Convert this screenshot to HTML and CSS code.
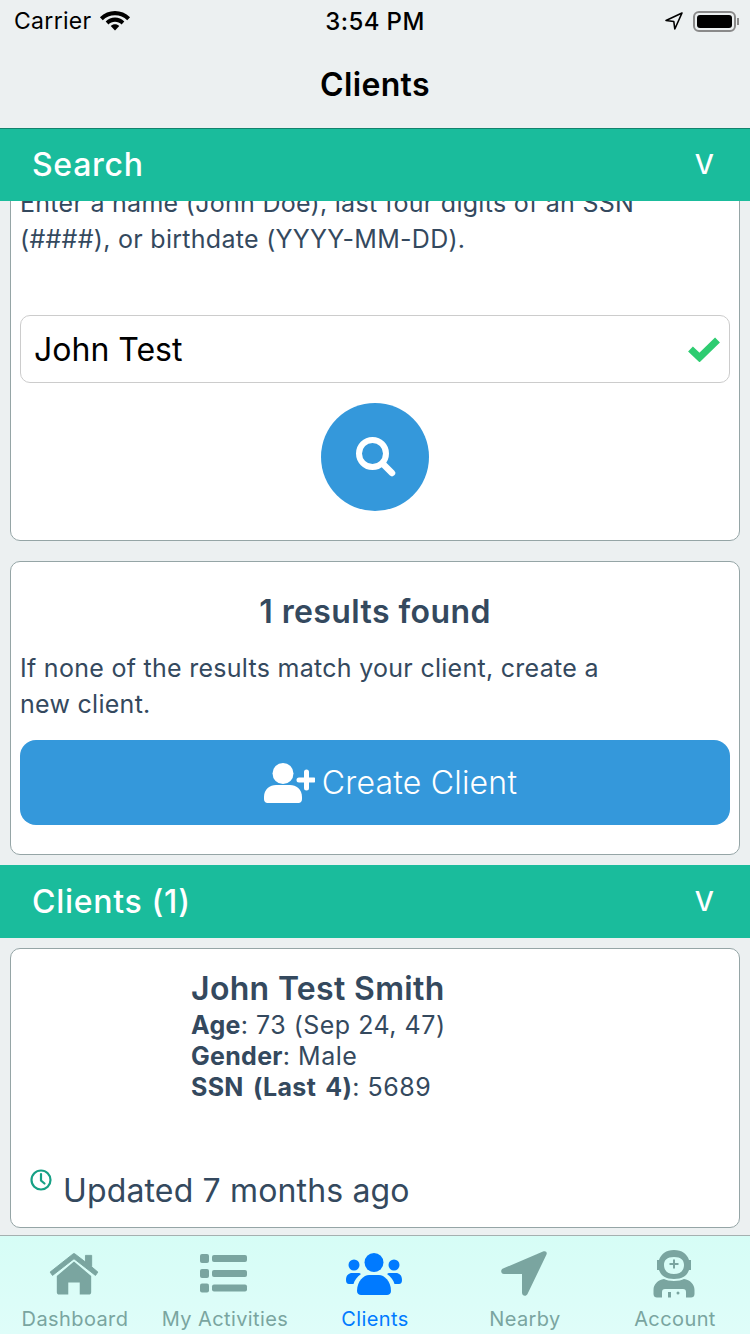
FILE: index.html
```html
<!DOCTYPE html>
<html lang="en">
<head>
<meta charset="utf-8">
<title>Clients</title>
<link rel="stylesheet" href="styles.css">
</head>
<body>
<div class="app">
  <header class="top">
    <div class="status">
      <div class="status-left">
        <span>Carrier</span>
        <svg class="wifi" viewBox="0 0 34 24" width="32" height="23"><path d="M17 3C11 3 5.500 5.300 1 9.600L4 12.800C7.500 9.400 12 7.500 17 7.500S26.500 9.400 30 12.800L33 9.600C28.500 5.300 23 3 17 3Z"/><path d="M17 10C13.300 10 9.800 11.500 7.100 14.200L10 17.300C11.900 15.400 14.300 14.400 17 14.400S22.100 15.400 24 17.300L26.900 14.200C24.200 11.500 20.700 10 17 10Z"/><path d="M17 17C15.300 17 13.700 17.700 12.500 18.900L17 23.800L21.500 18.900C20.300 17.700 18.700 17 17 17Z"/></svg>
      </div>
      <span class="status-time">3:54 PM</span>
      <div class="status-right">
        <svg class="loc" viewBox="0 0 20 20" width="20" height="20"><path d="M18 2 2 9.500 9.800 10.500 10.800 18Z" fill="none" stroke="#000" stroke-width="1.600" stroke-linejoin="round"/></svg>
        <div class="battery"><div class="battery-fill"></div></div>
        <div class="battery-cap"></div>
      </div>
    </div>
    <div class="nav-title">Clients</div>
  </header>

  <main class="content">
    <div class="section-bar section-bar-first">
      <span>Search</span><span class="chev">V</span>
    </div>
    <section class="card card-search">
      <p class="body-text">Enter a name (John Doe), last four digits of an SSN (####), or birthdate (YYYY-MM-DD).</p>
      <div class="field">
        <span class="field-value">John Test</span>
        <svg class="field-check" viewBox="0 0 34 26" width="34" height="26"><path d="M3.500 13 12.500 21.500 30.500 4" fill="none" stroke="#2ecc71" stroke-width="7"/></svg>
      </div>
      <div class="search-row">
        <div class="search-btn">
          <svg viewBox="0 0 42 42" width="42" height="42"><circle cx="17.500" cy="17.500" r="13.500" fill="none" stroke="#fff" stroke-width="6"/><path d="M28 28 37 37" stroke="#fff" stroke-width="6.500" stroke-linecap="round"/></svg>
        </div>
      </div>
    </section>

    <section class="card card-results">
      <h2 class="results-title">1 results found</h2>
      <p class="body-text results-text">If none of the results match your client, create a new client.</p>
      <div class="create-btn">
        <svg viewBox="0 0 52 42" width="52" height="42"><circle cx="20" cy="11.500" r="10.500" fill="#fff"/><path d="M1 35C1 27 7 23 13 23H27C33 23 39 27 39 35V37C39 39.500 37.500 41 35.500 41H4.500C2.500 41 1 39.500 1 37Z" fill="#fff"/><path d="M43.500 10V26M36 18H51" stroke="#fff" stroke-width="5" stroke-linecap="round"/></svg>
        <span>Create Client</span>
      </div>
    </section>

    <div class="section-bar section-bar-clients">
      <span>Clients (1)</span><span class="chev">V</span>
    </div>

    <section class="card card-client">
      <div class="client-info">
        <h3 class="client-name">John Test Smith</h3>
        <div class="client-line"><b>Age</b>: 73 (Sep 24, 47)</div>
        <div class="client-line"><b>Gender</b>: Male</div>
        <div class="client-line"><b>SSN (Last 4)</b>: 5689</div>
      </div>
      <div class="updated">
        <svg viewBox="0 0 22 22" width="22" height="22"><circle cx="11" cy="11" r="9.500" fill="none" stroke="#16a085" stroke-width="2.200"/><path d="M11 5V11.500L14.500 14.500" fill="none" stroke="#16a085" stroke-width="2.200" stroke-linecap="round"/></svg>
        <span>Updated 7 months ago</span>
      </div>
    </section>
  </main>

  <nav class="tabs">
    <div class="tab">
      <div class="tab-icon"><svg viewBox="0 0 54 44" width="52" height="42"><path d="M27 9 9 24V41C9 42.500 10 43.500 11.500 43.500H21V31H33V43.500H42.500C44 43.500 45 42.500 45 41V24Z"/><path d="M2 20 26 1Q27 .3 28 1L39 9.500V2.500H45.500V14.500L52 20 49.500 23.500 27 6 4.500 23.500Z" stroke="#7aa5a0" stroke-width="1" stroke-linejoin="round"/></svg></div>
      <span>Dashboard</span>
    </div>
    <div class="tab">
      <div class="tab-icon"><svg viewBox="0 0 48 40" width="48" height="40"><rect x="0" y="0" width="9" height="9" rx="2"/><rect x="12" y="1" width="35" height="7" rx="2"/><rect x="0" y="15" width="9" height="9" rx="2"/><rect x="12" y="16" width="35" height="7" rx="2"/><rect x="0" y="29.500" width="9" height="9" rx="2"/><rect x="12" y="30.500" width="35" height="7" rx="2"/></svg></div>
      <span>My Activities</span>
    </div>
    <div class="tab tab-active">
      <div class="tab-icon"><svg viewBox="0 0 58 42" width="58" height="42"><circle cx="29" cy="9.500" r="9.500"/><circle cx="9" cy="12" r="5.500"/><circle cx="49" cy="12" r="5.500"/><path d="M12 38C12 28 19 22 24 22H34C39 22 46 28 46 38C46 40.500 44 42 42 42H16C14 42 12 40.500 12 38Z"/><path d="M1 27C1 22 4 20 7 20H13C14.500 20 15.500 20.500 16 21C12 24 9.500 27 8.500 31H4C2 31 1 29.500 1 27Z"/><path d="M57 27C57 22 54 20 51 20H45C43.500 20 42.500 20.500 42 21C46 24 48.500 27 49.500 31H54C56 31 57 29.500 57 27Z"/></svg></div>
      <span>Clients</span>
    </div>
    <div class="tab">
      <div class="tab-icon"><svg viewBox="0 0 48 48" width="48" height="48"><path d="M43 1.500 3 18.500C0 20 1 24 4 24H22V42.500C22 46 26 47 27.500 44L46.500 4.500C47.500 2 45.500 .5 43 1.500Z"/></svg></div>
      <span>Nearby</span>
    </div>
    <div class="tab">
      <div class="tab-icon"><svg viewBox="0 0 42 48" width="42" height="48"><path fill-rule="evenodd" d="M21 0C29 0 34 4 36 10H38V20H36C34 26 29 29 21 29S8 26 6 20H4V10H6C8 4 13 0 21 0ZM21 7C14 7 11 10 11 15S14 24 21 24 31 20 31 15 28 7 21 7Z"/><path d="M20 9.500H22V13H25.500V15H22V18.500H20V15H16.500V13H20Z"/><path fill-rule="evenodd" d="M11 29C15 31.500 27 31.500 31 29C37 30 41.500 34 41.500 40V44C41.500 46.500 40 47.500 38 47.500H33V42C33 40 32 39 30 39H12C10 39 9 40 9 42V47.500H4C2 47.500 .5 46.500 .5 44V40C.5 34 5 30 11 29Z"/><rect x="15" y="42" width="3" height="5.500"/><circle cx="25" cy="43" r="1.500"/></svg></div>
      <span>Account</span>
    </div>
  </nav>
</div>
</body>
</html>
```
FILE: styles.css
```css
* { box-sizing: border-box; }
html, body { margin: 0; padding: 0; }
body { font-family: Inter, "Liberation Sans", sans-serif; }
.app { width: 750px; height: 1334px; display: flex; flex-direction: column; background: #ecf0f1; overflow: hidden; }
.top { height: 128px; flex: none; background: #ecf0f1; }
.status { height: 40px; display: flex; align-items: center; justify-content: space-between; padding: 2px 11px 0 14px; position: relative; color: #000; font-size: 23px; letter-spacing: .3px; }
.status-left { display: flex; align-items: center; gap: 7px; }
.wifi { fill: #000; margin-top: -3px; }
.status-time { position: absolute; left: 0; right: 0; text-align: center; font-weight: 500; font-size: 24px; letter-spacing: .4px; }
.status-right { display: flex; align-items: center; }
.loc { margin-right: 9px; }
.battery { width: 43px; height: 21px; border: 2px solid #8a8a8a; border-radius: 6px; padding: 2px; }
.battery-fill { height: 100%; width: 100%; background: #000; border-radius: 3px; }
.battery-cap { width: 2px; height: 7px; background: #8a8a8a; margin-left: 1px; }
.nav-title { height: 88px; display: flex; align-items: center; justify-content: center; font-size: 32px; font-weight: 600; color: #000; letter-spacing: .35px; }
.content { flex: none; height: 1107px; overflow: hidden; display: flex; flex-direction: column; }
.section-bar { height: 73px; flex: none; background: #1abc9c; color: #fff; display: flex; align-items: center; justify-content: space-between; padding: 0 36px 2px 32px; font-size: 32px; font-weight: 500; letter-spacing: .7px; position: relative; z-index: 1; }
.section-bar-first { border-top: 1px solid #12836d; }
.section-bar-clients { margin-top: 10px; padding-bottom: 0; }
.chev { font-size: 27px; font-weight: 500; letter-spacing: 0; }
.card { background: #fff; border: 1px solid #95a5a6; border-radius: 10px; margin: 0 10px; flex: none; padding: 0 9px; color: #34495e; }
.card-search { margin-top: -32px; height: 372px; padding-top: 15px; }
.body-text { margin: 0; font-size: 25px; line-height: 36px; letter-spacing: .28px; }
.field { height: 68px; margin-top: 58px; border: 1px solid #ccc; border-radius: 10px; display: flex; align-items: center; justify-content: space-between; padding: 0 8px 0 13px; }
.field-value { font-size: 32px; color: #000; }
.search-row { display: flex; justify-content: center; margin-top: 20px; }
.search-btn { width: 108px; height: 108px; border-radius: 50%; background: #3498db; display: flex; align-items: center; justify-content: center; padding-left: 2px; }
.card-results { margin-top: 20px; height: 294px; padding-top: 30px; }
.results-title { margin: 0; text-align: center; font-size: 32px; line-height: 40px; font-weight: 600; letter-spacing: .4px; }
.results-text { margin-top: 18px; width: 600px; }
.create-btn { height: 85px; margin-top: 18px; background: #3498db; border-radius: 16px; color: #fff; display: flex; align-items: center; justify-content: center; gap: 7px; padding-left: 30px; font-size: 32px; font-weight: 300; letter-spacing: .2px; }
.card-client { margin-top: 10px; height: 280px; position: relative; padding: 19px 20px 0 180px; }
.client-name { margin: 0; font-size: 32px; line-height: 42px; font-weight: 600; letter-spacing: .33px; }
.client-line { font-size: 25px; line-height: 31px; letter-spacing: .5px; }
.client-line b { font-weight: 700; letter-spacing: .3px; word-spacing: 3px; }
.updated { position: absolute; left: 19px; top: 222px; display: flex; align-items: flex-start; gap: 11px; font-size: 32px; line-height: 40px; letter-spacing: .15px; }
.updated svg { margin-top: -2px; }
.tabs { height: 99px; flex: none; background: linear-gradient(to bottom, #d6fdf6, #dffdf9); border-top: 1px solid #a5b0b0; display: flex; }
.tab { flex: 1; display: flex; flex-direction: column; align-items: center; justify-content: flex-end; color: #7aa5a0; fill: #7aa5a0; font-size: 20px; line-height: 24px; letter-spacing: .4px; padding-bottom: 3px; gap: 8px; }
.tab-icon { height: 50px; display: flex; align-items: center; justify-content: center; margin-right: 3px; }
.tab-active { color: #007aff; fill: #007aff; }
```
